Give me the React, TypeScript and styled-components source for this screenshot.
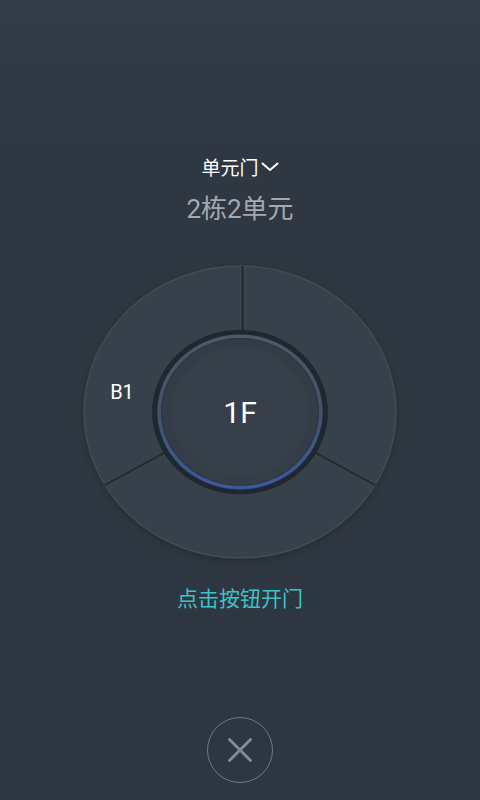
import React from "react";
import styled, { createGlobalStyle } from "styled-components";

const Global = createGlobalStyle`
  html, body { margin: 0; padding: 0; }
  body {
    background: #2f3842;
    font-family: "Roboto", "Noto Sans CJK SC", sans-serif;
  }
`;

const Page = styled.div`
  width: 480px;
  height: 800px;
  background: linear-gradient(180deg, #333d47 0%, #2f3842 12%, #2e3741 100%);
  display: flex;
  flex-direction: column;
  align-items: center;
  padding-top: 155px;
  box-sizing: border-box;
  overflow: hidden;
`;

const DoorSelect = styled.div`
  display: flex;
  align-items: center;
  gap: 2px;
  height: 24px;
  color: #ffffff;
  font-size: 19px;
  line-height: 24px;
  font-family: "Noto Sans CJK SC", sans-serif;
`;

const UnitName = styled.div`
  margin-top: 15px;
  height: 30px;
  line-height: 30px;
  font-size: 26px;
  color: #a3a9b0;
  font-family: "Roboto", "Noto Sans CJK SC", sans-serif;
`;

const Wheel = styled.div`
  position: relative;
  margin-top: 41px;
  width: 314px;
  height: 294px;
  svg {
    display: block;
    filter: drop-shadow(0 2px 3px rgba(0, 0, 0, 0.25));
  }
`;

const Label = styled.span<{ $x: number; $y: number; $size: number }>`
  position: absolute;
  left: ${(p) => p.$x}px;
  top: ${(p) => p.$y}px;
  transform: translate(-50%, -50%);
  color: #ffffff;
  font-family: "Roboto", sans-serif;
  font-size: ${(p) => p.$size}px;
  line-height: 1;
`;

const Hint = styled.div`
  margin-top: 24px;
  height: 28px;
  line-height: 28px;
  font-size: 21px;
  color: #3cc3c9;
  font-family: "Noto Sans CJK SC", sans-serif;
`;

const CloseButton = styled.button`
  margin-top: 106px;
  width: 66px;
  height: 66px;
  border-radius: 50%;
  border: 1.5px solid #6f7b8a;
  background: transparent;
  display: flex;
  align-items: center;
  justify-content: center;
  padding: 0;
  cursor: pointer;
`;

const pt = (r: number, deg: number) => {
  const a = (deg * Math.PI) / 180;
  return [150 + r * Math.cos(a), 150 - r * Math.sin(a)];
};

const Divider = ({ deg, dx = 0 }: { deg: number; dx?: number }) => {
  const [x1, y1] = pt(84, deg);
  const [x2, y2] = pt(149, deg);
  return (
    <g>
      <line x1={x1 + dx} y1={y1} x2={x2 + dx} y2={y2} stroke="#3f4a55" strokeWidth={4} />
      <line x1={x1 + dx} y1={y1} x2={x2 + dx} y2={y2} stroke="#242c35" strokeWidth={2.5} />
    </g>
  );
};

export default function App() {
  return (
    <>
      <Global />
      <Page>
        <DoorSelect>
          单元门
          <svg width="18" height="12" viewBox="0 0 18 12">
            <path d="M1.5 2.5 L9 9 L16.5 2.5" fill="none" stroke="#ffffff" strokeWidth="2" strokeLinecap="round" strokeLinejoin="round" />
          </svg>
        </DoorSelect>
        <UnitName>2栋2单元</UnitName>
        <Wheel>
          <svg width="314" height="294" viewBox="0 0 300 300" preserveAspectRatio="none">
            <defs>
              <linearGradient id="blueRing" x1="0" y1="0" x2="0" y2="1">
                <stop offset="0" stopColor="#4c5868" />
                <stop offset="0.5" stopColor="#43516b" />
                <stop offset="1" stopColor="#3a5aa0" />
              </linearGradient>
              <linearGradient id="face" x1="0" y1="0" x2="0" y2="1">
                <stop offset="0" stopColor="#333c46" />
                <stop offset="1" stopColor="#353e48" />
              </linearGradient>
            </defs>
            <circle cx="150" cy="150" r="149" fill="#37414b" stroke="#414c57" strokeWidth="1.5" />
            <Divider deg={90} dx={2.5} />
            <Divider deg={210} />
            <Divider deg={330} />
            <circle cx="150" cy="150" r="84" fill="#1f2831" />
            <circle cx="150" cy="150" r="79" fill="url(#blueRing)" />
            <circle cx="150" cy="150" r="75.5" fill="#2a333c" />
            <circle cx="150" cy="150" r="74.5" fill="url(#face)" />
            <circle cx="150" cy="150" r="66" fill="#37404a" />
          </svg>
          <Label $x={39} $y={127} $size={20}>B1</Label>
          <Label $x={157} $y={148} $size={30}>1F</Label>
        </Wheel>
        <Hint>点击按钮开门</Hint>
        <CloseButton aria-label="关闭">
          <svg width="26" height="26" viewBox="0 0 26 26">
            <path d="M2.5 2.5 L23.5 23.5 M23.5 2.5 L2.5 23.5" stroke="#7d8b9b" strokeWidth="3" strokeLinecap="round" />
          </svg>
        </CloseButton>
      </Page>
    </>
  );
}
